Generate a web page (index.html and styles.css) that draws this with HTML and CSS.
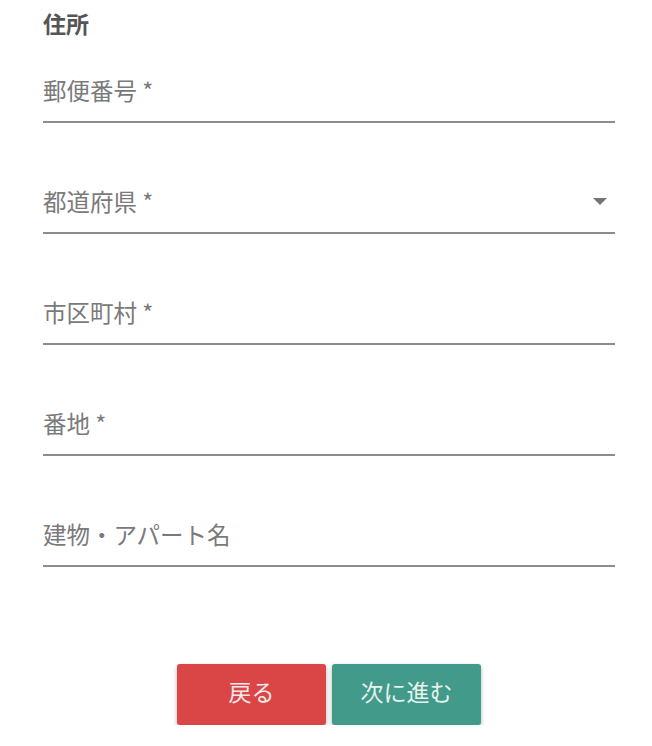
FILE: index.html
```html
<!DOCTYPE html>
<html lang="ja">
<head>
<meta charset="utf-8">
<link rel="stylesheet" href="styles.css">
</head>
<body>
<div class="form">
  <h2 class="heading">住所</h2>
  <div class="fields">
    <div class="field"><span class="label">郵便番号 *</span></div>
    <div class="field select"><span class="label">都道府県 *</span><svg class="caret" width="14" height="7" viewBox="0 0 14 7"><path d="M0 0h14L7 7z" fill="#757575"/></svg></div>
    <div class="field"><span class="label">市区町村 *</span></div>
    <div class="field"><span class="label">番地 *</span></div>
    <div class="field"><span class="label">建物・アパート名</span></div>
  </div>
  <div class="actions">
    <button class="btn back">戻る</button>
    <button class="btn next">次に進む</button>
  </div>
</div>
</body>
</html>
```
FILE: styles.css
```css
html, body {
  margin: 0;
  padding: 0;
  background: #fff;
}
body {
  font-family: "Noto Sans CJK JP", "Noto Sans", sans-serif;
  color: #555;
}
.form {
  width: 572px;
  padding: 6px 37px 0 43px;
}
.heading {
  margin: 0 0 37px 0;
  font-size: 23px;
  line-height: 34px;
  font-weight: 700;
  color: #555;
}
.fields {
  display: flex;
  flex-direction: column;
  gap: 65px;
}
.field {
  display: flex;
  align-items: center;
  justify-content: space-between;
  height: 26px;
  padding-bottom: 18px;
  border-bottom: 2px solid #8c8c8c;
}
.label {
  font-size: 23.5px;
  line-height: 26px;
  color: #7a7a7a;
}
.caret {
  margin-right: 8px;
}
.actions {
  display: flex;
  justify-content: center;
  gap: 6px;
  margin-top: 97px;
}
.btn {
  width: 149px;
  height: 61px;
  padding: 0 0 7px 0;
  border: none;
  border-radius: 3px;
  font-family: "Noto Sans CJK JP", sans-serif;
  font-size: 23px;
  color: #f3e9e9;
  box-shadow: 0 2px 4px rgba(0,0,0,0.3);
}
.back {
  background: #da4545;
}
.next {
  background: #419a8a;
  color: #e6f2ef;
}
```
